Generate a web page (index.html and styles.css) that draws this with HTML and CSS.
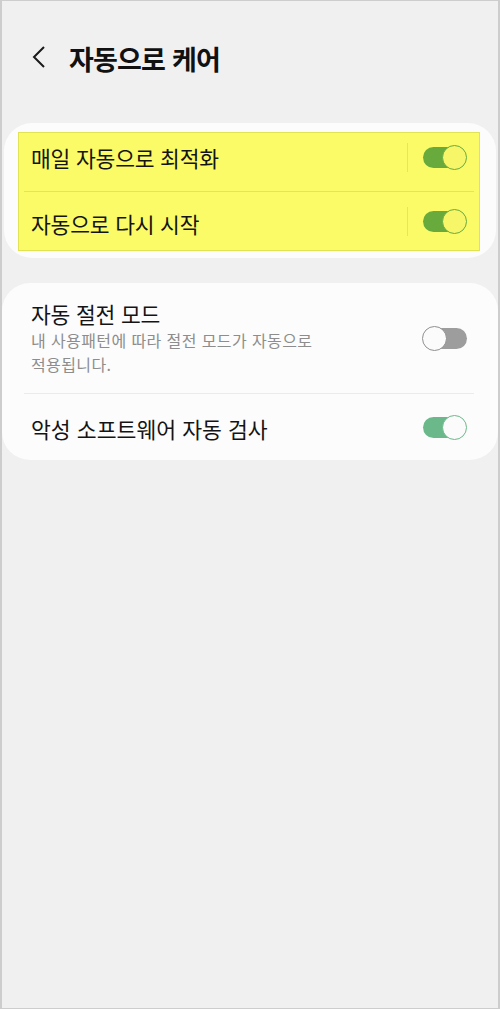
FILE: index.html
```html
<!DOCTYPE html>
<html lang="ko">
<head>
<meta charset="utf-8">
<link rel="stylesheet" href="styles.css">
</head>
<body>
<div class="screen">
  <header class="topbar">
    <svg class="back" width="14" height="24" viewBox="0 0 14 24"><path d="M12 2 L2 12 L12 22" fill="none" stroke="#1a1a1a" stroke-width="2"/></svg>
    <h1 class="title">자동으로 케어</h1>
  </header>

  <section class="card card-hl">
    <div class="hl">
      <div class="row row-1">
        <span class="label">매일 자동으로 최적화</span>
        <span class="vdiv"></span>
        <span class="toggle on hlon"><span class="track"></span><span class="thumb"></span></span>
      </div>
      <div class="sep hlsep"></div>
      <div class="row row-2">
        <span class="label">자동으로 다시 시작</span>
        <span class="vdiv"></span>
        <span class="toggle on hlon"><span class="track"></span><span class="thumb"></span></span>
      </div>
    </div>
  </section>

  <section class="card card2">
    <div class="row row-tall">
      <div class="texts">
        <span class="label">자동 절전 모드</span>
        <span class="sub">내 사용패턴에 따라 절전 모드가 자동으로<br>적용됩니다.</span>
      </div>
      <span class="toggle off"><span class="track"></span><span class="thumb"></span></span>
    </div>
    <div class="sep"></div>
    <div class="row row-b">
      <span class="label">악성 소프트웨어 자동 검사</span>
      <span class="toggle on"><span class="track"></span><span class="thumb"></span></span>
    </div>
  </section>
</div>
</body>
</html>
```

FILE: styles.css
```css
* { box-sizing: border-box; }
html, body { margin: 0; padding: 0; }
body {
  background: #f0f0f0;
  font-family: "Noto Sans CJK KR", "Noto Sans", sans-serif;
  color: #111;
}
.screen {
  width: 500px;
  height: 1009px;
  border: 1px solid #cdcdcd;
  border-left-width: 2px;
  border-right-width: 2px;
  background: #f0f0f0;
  overflow: hidden;
}
.topbar {
  display: flex;
  align-items: center;
  height: 114px;
  padding: 0 0 0 30px;
}
.back { margin-right: 23px; margin-top: -2px; }
.title {
  margin: 0;
  font-size: 27px;
  font-weight: 700;
  letter-spacing: -0.8px;
  color: #111;
}
.card {
  background: #fcfcfc;
  border-radius: 28px;
}
.card-hl {
  margin: 8px 2px 0 2px;
  padding: 9px 16px 7px 14px;
}
.hl {
  background: #fbfb68;
  border: 1px solid #e2e255;
}
.row {
  display: flex;
  align-items: center;
  height: 58px;
  padding: 0 12px 0 12px;
}
.row-1 { padding-bottom: 10px; }
.row-2 { padding-top: 1px; }
.row-2 .label { margin-top: 3px; }
.label {
  font-size: 21.5px;
  letter-spacing: -0.2px;
  flex: 1;
  color: #141414;
}
.vdiv {
  width: 1px;
  height: 29px;
  background: #e6e658;
  margin-right: 14px;
}
.sep {
  height: 1px;
  background: #ebebeb;
}
.hlsep { background: #e4e45c; margin: 0 5px; }
.card2 {
  margin-top: 25px;
  padding: 0 24px 0 22px;
}
.card2 .row { padding: 0 7px 0 7px; }
.row-tall { height: 110px; align-items: center; }
.row-b { height: 66px; }
.row-b .label { font-size: 21.6px; letter-spacing: 0; margin-top: 2px; }
.texts { flex: 1; display: flex; flex-direction: column; margin-top: -2px; }
.texts .label { flex: none; line-height: 31px; }
.sub {
  font-size: 16px;
  color: #8d8d8d;
  line-height: 23.4px;
  letter-spacing: 0.4px;
}
.toggle {
  position: relative;
  width: 45px;
  height: 25px;
  flex: none;
}
.track {
  position: absolute;
  left: 1px; right: 5px;
  top: 2px; bottom: 2px;
  border-radius: 11px;
}
.thumb {
  position: absolute;
  top: 0;
  width: 25px;
  height: 25px;
  border-radius: 50%;
  border: 1.5px solid;
}
.on .thumb { right: 0; }
.on .track { background: #6bb98b; }
.on .thumb { background: #fbfbfb; border-color: #6bb98b; }
.hlon .track { background: #68ab3c; }
.hlon .thumb { background: #f6f668; border-color: #68ab3c; }
.off .track { left: 6px; right: 0; background: #9d9d9d; }
.off .thumb { left: 0; background: #fbfbfb; border-color: #8f8f8f; }
```
